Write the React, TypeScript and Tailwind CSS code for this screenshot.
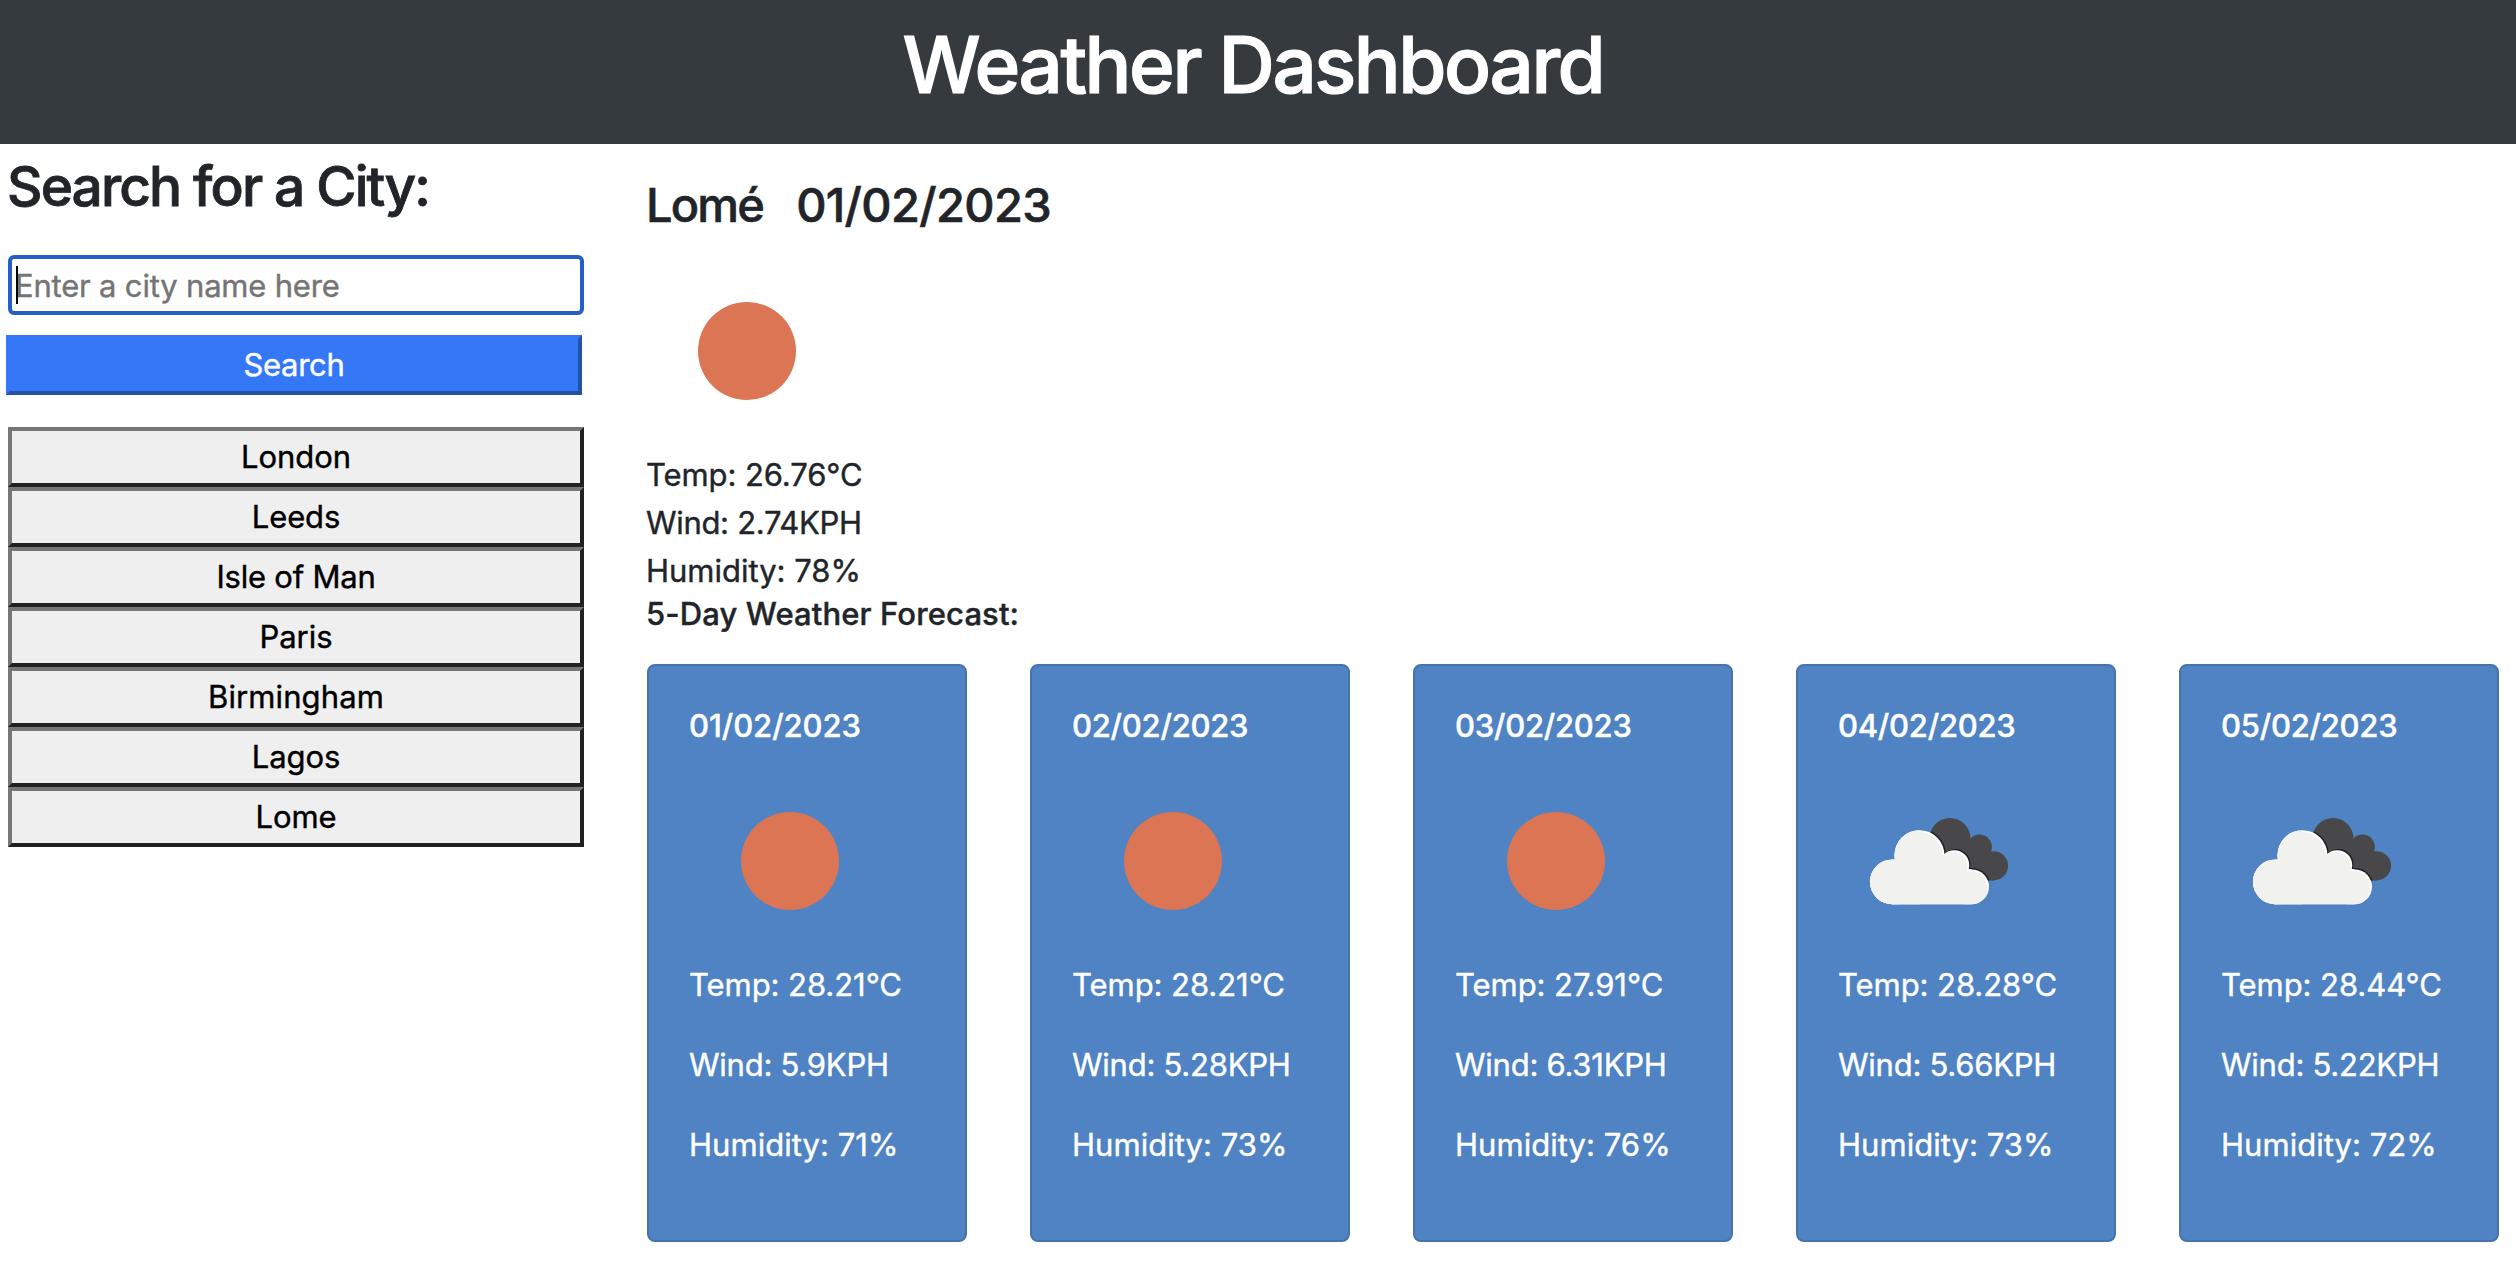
type Condition = "sun" | "clouds";

interface Forecast {
  date: string;
  dateTracking: string;
  condition: Condition;
  temp: string;
  wind: string;
  humidity: string;
}

const cities = [
  { name: "London", tracking: "tracking-[-0.08px]" },
  { name: "Leeds", tracking: "tracking-[-0.08px]" },
  { name: "Isle of Man", tracking: "tracking-[-0.22px]" },
  { name: "Paris", tracking: "tracking-[-0.08px]" },
  { name: "Birmingham", tracking: "tracking-[0.1px]" },
  { name: "Lagos", tracking: "tracking-[-0.08px]" },
  { name: "Lome", tracking: "tracking-[-0.08px]" },
];

const forecasts: Forecast[] = [
  { date: "01/02/2023", dateTracking: "tracking-[-0.06px]", condition: "sun", temp: "28.21", wind: "5.9", humidity: "71" },
  { date: "02/02/2023", dateTracking: "tracking-[-0.25px]", condition: "sun", temp: "28.21", wind: "5.28", humidity: "73" },
  { date: "03/02/2023", dateTracking: "tracking-[-0.25px]", condition: "sun", temp: "27.91", wind: "6.31", humidity: "76" },
  { date: "04/02/2023", dateTracking: "tracking-[-0.25px]", condition: "clouds", temp: "28.28", wind: "5.66", humidity: "73" },
  { date: "05/02/2023", dateTracking: "tracking-[-0.25px]", condition: "clouds", temp: "28.44", wind: "5.22", humidity: "72" },
];

function SunIcon() {
  return (
    <svg viewBox="0 0 200 200" className="block size-[200px]" aria-hidden="true">
      <circle cx="100" cy="100" r="49" fill="#db7554" />
    </svg>
  );
}

function WhiteCloudShapes() {
  return (
    <>
      <circle cx="53.3" cy="120.8" r="22.4" />
      <circle cx="80.5" cy="94.2" r="25" />
      <circle cx="115.2" cy="104.2" r="15" />
      <circle cx="132.6" cy="125.8" r="17.4" />
      <path d="M53.3 105H80V94H115V108H132.6V143.2H53.3Z" />
    </>
  );
}

function DarkCloudShapes() {
  return (
    <>
      <circle cx="111" cy="77.5" r="20.5" />
      <circle cx="140.5" cy="86" r="12.4" />
      <circle cx="154.5" cy="104.8" r="14.6" />
      <path d="M100 78H131.3L150 91L154.5 119.4H120Z" />
    </>
  );
}

function CloudsIcon({ id }: { id: string }) {
  return (
    <svg viewBox="0 0 200 200" className="block size-[200px]" aria-hidden="true">
      <defs>
        <clipPath id={`dark-${id}`}>
          <DarkCloudShapes />
        </clipPath>
        <clipPath id={`white-${id}`}>
          <WhiteCloudShapes />
        </clipPath>
      </defs>
      <g fill="#48484a">
        <DarkCloudShapes />
      </g>
      <g clipPath={`url(#dark-${id})`}>
        <g fill="#222224" transform="translate(1.3 -1.1)">
          <WhiteCloudShapes />
        </g>
      </g>
      <g fill="#ffffff">
        <WhiteCloudShapes />
      </g>
      <g clipPath={`url(#white-${id})`}>
        <g fill="#f1f1f0" transform="translate(-1.6 1.6)">
          <WhiteCloudShapes />
        </g>
        <path d="M28 60H80.5V146H28Z" fill="#f1f1f0" />
      </g>
    </svg>
  );
}

function ForecastCard({ day }: { day: Forecast }) {
  return (
    <article className="h-[578px] w-80 rounded-lg border-2 border-[#4673aa] bg-[#4f83c3] px-10 pt-[41px] text-white">
      <h3 className={`mb-4 leading-[38px] font-medium ${day.dateTracking}`}>{day.date}</h3>
      <div className="ml-px">
        {day.condition === "sun" ? <SunIcon /> : <CloudsIcon id={day.date.slice(0, 2)} />}
      </div>
      <div className="flex flex-col gap-8 leading-[48px] whitespace-nowrap">
        <p className="tracking-[-0.06px]">Temp: {day.temp}°C</p>
        <p className="tracking-[-0.24px]">Wind: {day.wind}KPH</p>
        <p className="tracking-[0.04px]">Humidity: {day.humidity}%</p>
      </div>
    </article>
  );
}

export default function App() {
  return (
    <div className="min-h-[1284px] bg-white font-['Inter','Liberation_Sans',sans-serif] text-[31px] text-[#212529] [-webkit-text-stroke:0.4px]">
      <header className="h-36 bg-[#353a3e] pt-[17px] pr-2.5 text-center">
        <h1 className="text-[78px] leading-[96px] font-medium tracking-[-2.44px] text-white [-webkit-text-stroke:1.2px]">Weather Dashboard</h1>
      </header>
      <div className="flex">
        <aside className="w-[647px] shrink-0 pt-[9px] pl-2">
          <h2 className="-ml-px text-[55px] leading-[66px] font-medium tracking-[-1.89px] [-webkit-text-stroke:0.8px]">Search for a City:</h2>
          <div className="relative mt-9 w-[576px]">
            <input
              type="text"
              placeholder="Enter a city name here"
              className="block h-[60px] w-full rounded-md border-4 border-[#265ec8] bg-white pl-[3px] tracking-[-0.19px] outline-none placeholder:text-[#757575]"
            />
            <span className="absolute top-[11px] left-2 h-[38px] w-0.5 bg-black" />
          </div>
          <button className="mt-5 -ml-0.5 block h-[60px] w-[576px] border-4 border-t-[#3478f7] border-r-[#2453a6] border-b-[#2453a6] border-l-[#3478f7] bg-[#3478f7] tracking-[-0.3px] text-white">
            Search
          </button>
          <div className="mt-8 flex w-[576px] flex-col text-black">
            {cities.map((city) => (
              <button
                key={city.name}
                className={`h-[60px] border-4 border-t-[#767676] border-r-[#212121] border-b-[#212121] border-l-[#767676] bg-[#efefef] ${city.tracking}`}
              >
                {city.name}
              </button>
            ))}
          </div>
        </aside>
        <main className="pt-8">
          <h2 className="mb-[18px] -ml-px flex gap-[33px] text-[47px] leading-[57px] font-medium [-webkit-text-stroke:0.6px]">
            <span className="tracking-[-1.8px]">Lomé</span>
            <span className="tracking-[-0.68px]">01/02/2023</span>
          </h2>
          <SunIcon />
          <div className="-ml-px leading-[48px]">
            <p className="tracking-[-0.09px]">Temp: 26.76°C</p>
            <p className="tracking-[-0.31px]">Wind: 2.74KPH</p>
            <p className="tracking-[-0.01px]">Humidity: 78%</p>
          </div>
          <h3 className="mb-[31px] -ml-px leading-[38px] font-medium tracking-[0.12px]">5-Day Weather Forecast:</h3>
          <section className="flex gap-[63px]">
            {forecasts.map((day) => (
              <ForecastCard key={day.date} day={day} />
            ))}
          </section>
        </main>
      </div>
    </div>
  );
}
